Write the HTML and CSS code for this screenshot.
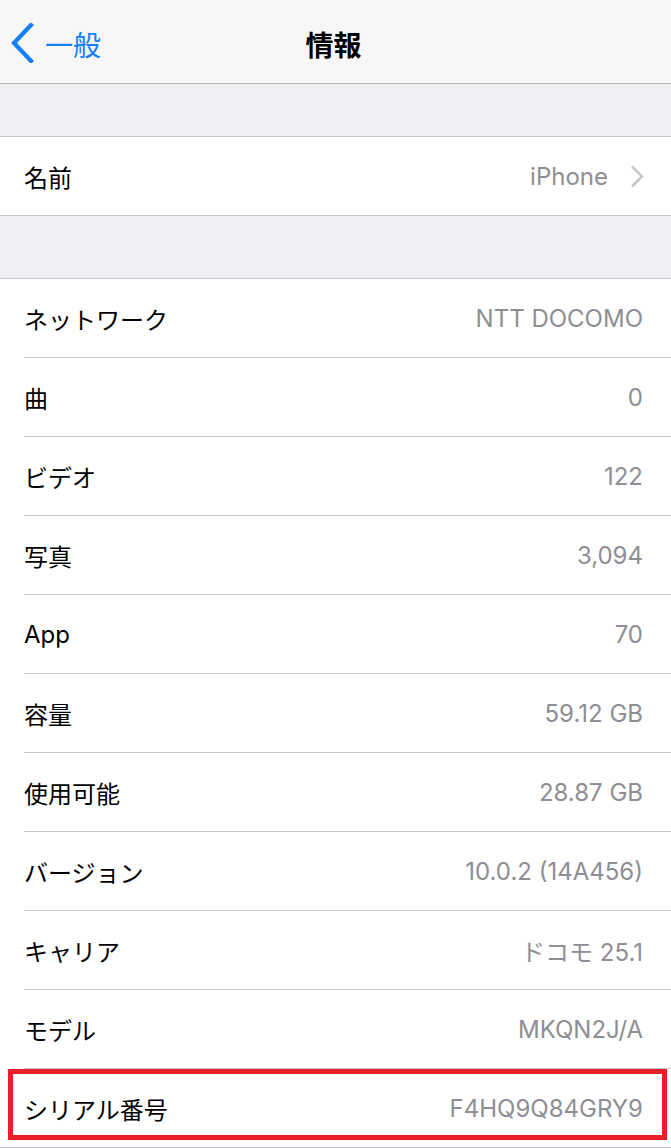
FILE: index.html
```html
<!DOCTYPE html>
<html lang="ja">
<head>
    <meta charset="UTF-8">
    <meta name="viewport" content="width=device-width, initial-scale=1.0">
    <title>情報</title>
    <link rel="stylesheet" href="styles.css">
</head>
<body>

    <header class="nav-bar">
        <a class="nav-back" href="#">
            <svg class="back-icon" width="24" height="40" viewBox="0 0 24 40">
                <path d="M20 2 L3 20 L20 38" fill="none" stroke="#157efb" stroke-width="4.2" stroke-linecap="square"/>
            </svg>
            <span>一般</span>
        </a>
        <h1 class="nav-title">情報</h1>
        <div></div>
    </header>

    <div class="group-gap first"></div>

    <!-- Name -->
    <ul class="group">
        <li class="row link">
            <span class="row-label">名前</span>
            <span class="row-value">iPhone</span>
            <svg class="chevron" width="14" height="23" viewBox="0 0 14 23">
                <path d="M2 1.5 L12 11.5 L2 21.5" fill="none" stroke="#c7c7cc" stroke-width="2.6"/>
            </svg>
        </li>
    </ul>

    <div class="group-gap"></div>

    <!-- Device info -->
    <ul class="group">
        <li class="row"><span class="row-label">ネットワーク</span><span class="row-value">NTT DOCOMO</span></li>
        <li class="row"><span class="row-label">曲</span><span class="row-value">0</span></li>
        <li class="row"><span class="row-label">ビデオ</span><span class="row-value">122</span></li>
        <li class="row"><span class="row-label">写真</span><span class="row-value">3,094</span></li>
        <li class="row"><span class="row-label">App</span><span class="row-value">70</span></li>
        <li class="row"><span class="row-label">容量</span><span class="row-value">59.12 GB</span></li>
        <li class="row"><span class="row-label">使用可能</span><span class="row-value">28.87 GB</span></li>
        <li class="row"><span class="row-label">バージョン</span><span class="row-value">10.0.2 (14A456)</span></li>
        <li class="row"><span class="row-label">キャリア</span><span class="row-value">ドコモ 25.1</span></li>
        <li class="row"><span class="row-label">モデル</span><span class="row-value">MKQN2J/A</span></li>
        <li class="row highlight"><span class="row-label">シリアル番号</span><span class="row-value">F4HQ9Q84GRY9</span></li>
    </ul>

</body>
</html>
```

FILE: styles.css
```css
body {
    font-family: 'Inter', 'Noto Sans CJK JP', sans-serif;
    background-color: #efeff4;
    margin: 0;
    padding: 0;
    overflow: hidden;
}
.nav-bar {
    display: grid;
    grid-template-columns: 1fr auto 1fr;
    align-items: center;
    height: 84px;
    padding-top: 5px;
    box-sizing: border-box;
    background-color: #f7f7f8;
    border-bottom: 1px solid #b2b2b2;
}
.nav-back {
    display: flex;
    align-items: center;
    gap: 10px;
    padding-left: 11px;
    color: #157efb;
    font-family: 'Noto Sans CJK JP', sans-serif;
    font-size: 28px;
    text-decoration: none;
}
.back-icon {
    display: block;
    margin-top: -2px;
}
.nav-title {
    margin: 0 4px 0 0;
    font-family: 'Noto Sans CJK JP', sans-serif;
    font-size: 28px;
    font-weight: bold;
    color: #000;
}
.group-gap {
    height: 62px;
}
.group-gap.first {
    height: 52px;
}
.group {
    display: flex;
    flex-direction: column;
    gap: 1px;
    list-style: none;
    margin: 0;
    padding: 0;
    background-color: white;
    border-top: 1px solid #c8c7cc;
    border-bottom: 1px solid #c8c7cc;
}
.row {
    position: relative;
    display: flex;
    align-items: center;
    height: 78px;
    padding: 0 28px 0 24px;
    font-size: 24px;
}
.row + .row::before {
    content: '';
    position: absolute;
    top: -1px;
    left: 24px;
    right: 0;
    height: 1px;
    background-color: #c8c7cc;
}
.row-label {
    color: #000;
}
.row-value {
    margin-left: auto;
    color: #8e8e93;
}
.row.link {
    padding-right: 27px;
}
.row.link .row-value {
    margin-right: 22px;
}
.chevron {
    display: block;
}
/* red frame drawn over the serial number row */
.row.highlight::after {
    content: '';
    position: absolute;
    top: 0;
    left: 8px;
    right: 4px;
    bottom: 7px;
    border: 5px solid #e81e2a;
    pointer-events: none;
}
```
